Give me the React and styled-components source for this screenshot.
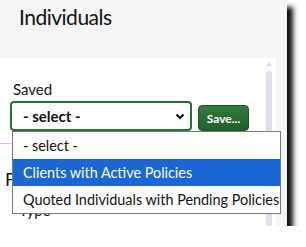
import React from "react";
import styled, { createGlobalStyle } from "styled-components";

const GlobalStyle = createGlobalStyle`
  html, body {
    margin: 0;
    padding: 0;
    background: #ffffff;
    font-family: Lato, "Noto Sans", sans-serif;
    color: #111;
  }
`;

const Window = styled.div`
  position: relative;
  width: 287px;
  height: 226px;
  display: flex;
  flex-direction: column;
  background: #f4f5f7;
  box-shadow: 6px 7px 5px rgba(0, 0, 0, 0.95);
`;

const Header = styled.div`
  height: 58px;
  flex-shrink: 0;
  padding-left: 19px;
  box-sizing: border-box;
`;

const Title = styled.h1`
  margin: 0;
  padding-top: 3px;
  font-size: 21px;
  letter-spacing: -0.5px;
  font-weight: 400;
  line-height: 28px;
  color: #111;
`;

const BodyRow = styled.div`
  flex: 1;
  display: flex;
  overflow: hidden;
`;

const Panel = styled.div`
  width: 276px;
  background: #ffffff;
  display: flex;
  overflow: hidden;
`;

const Content = styled.div`
  flex: 1;
  padding-top: 21px;
`;

const Label = styled.div`
  font-size: 15px;
  line-height: 20px;
  padding-left: ${(p) => p.$indent || 13}px;
  margin-top: ${(p) => p.$gap || 0}px;
`;

const FieldRow = styled.div`
  display: flex;
  align-items: flex-end;
  gap: 6px;
  padding-left: 10px;
  margin-top: 2px;
`;

const SelectBox = styled.div`
  width: 182px;
  height: 30px;
  box-sizing: border-box;
  border: 2px solid #2f6b3b;
  border-radius: 4px;
  display: flex;
  align-items: center;
  justify-content: space-between;
  padding: 0 5px 0 11px;
  font-size: 15px;
  font-weight: 700;
  color: #111;
`;

const SaveButton = styled.button`
  width: 51px;
  height: 26px;
  box-sizing: border-box;
  border: 1px solid #1d5227;
  border-radius: 4px;
  background: linear-gradient(#2f7d3d, #215f2c);
  color: #fff;
  font-family: Lato, sans-serif;
  font-size: 12px;
  font-weight: 700;
  padding: 0;
`;

const Rule = styled.div`
  height: 1px;
  background: #c9ccd1;
  margin-top: 12px;
`;

const SectionTitle = styled.div`
  font-size: 18px;
  line-height: 24px;
  padding-left: 5px;
  margin-top: 23px;
`;

const Scrollbar = styled.div`
  width: 10px;
  margin-right: 2px;
  display: flex;
  flex-direction: column;
  align-items: center;
  padding-top: 4px;
`;

const ScrollArrow = styled.div`
  width: 0;
  height: 0;
  border-left: 3px solid transparent;
  border-right: 3px solid transparent;
  border-bottom: 4px solid #dcdfe4;
`;

const ScrollThumb = styled.div`
  margin-top: 5px;
  width: 6px;
  flex: 1;
  border-radius: 3px 3px 0 0;
  background: #dcdfe4;
`;

const SideStrip = styled.div`
  flex: 1;
  background: #f4f5f7;
`;

const Menu = styled.ul`
  position: absolute;
  left: 12px;
  top: 131px;
  width: 269px;
  margin: 0;
  padding: 0;
  list-style: none;
  box-sizing: border-box;
  background: #fff;
  border: 1px solid #7a7a7a;
`;

const Option = styled.li`
  height: 27px;
  line-height: 27px;
  padding-left: 10px;
  font-size: 14.4px;
  white-space: nowrap;
  background: ${(p) => (p.$active ? "#1b66d2" : "transparent")};
  color: ${(p) => (p.$active ? "#fff" : "#111")};
`;

const Chevron = () => (
  <svg width="10" height="7" viewBox="0 0 10 7">
    <path d="M1.5 1.5 L5 5 L8.5 1.5" fill="none" stroke="#111" strokeWidth="2.2" />
  </svg>
);

const options = [
  "- select -",
  "Clients with Active Policies",
  "Quoted Individuals with Pending Policies",
];

export default function App() {
  return (
    <>
      <GlobalStyle />
      <Window>
        <Header>
          <Title>Individuals</Title>
        </Header>
        <BodyRow>
          <Panel>
            <Content>
              <Label>Saved</Label>
              <FieldRow>
                <SelectBox>
                  <span>- select -</span>
                  <Chevron />
                </SelectBox>
                <SaveButton>Save...</SaveButton>
              </FieldRow>
              <Rule />
              <SectionTitle>Filters</SectionTitle>
              <Label $indent={19} $gap={9}>Type</Label>
            </Content>
            <Scrollbar>
              <ScrollArrow />
              <ScrollThumb />
            </Scrollbar>
          </Panel>
          <SideStrip />
        </BodyRow>
        <Menu>
          {options.map((o, i) => (
            <Option key={o} $active={i === 1}>
              {o}
            </Option>
          ))}
        </Menu>
      </Window>
    </>
  );
}
